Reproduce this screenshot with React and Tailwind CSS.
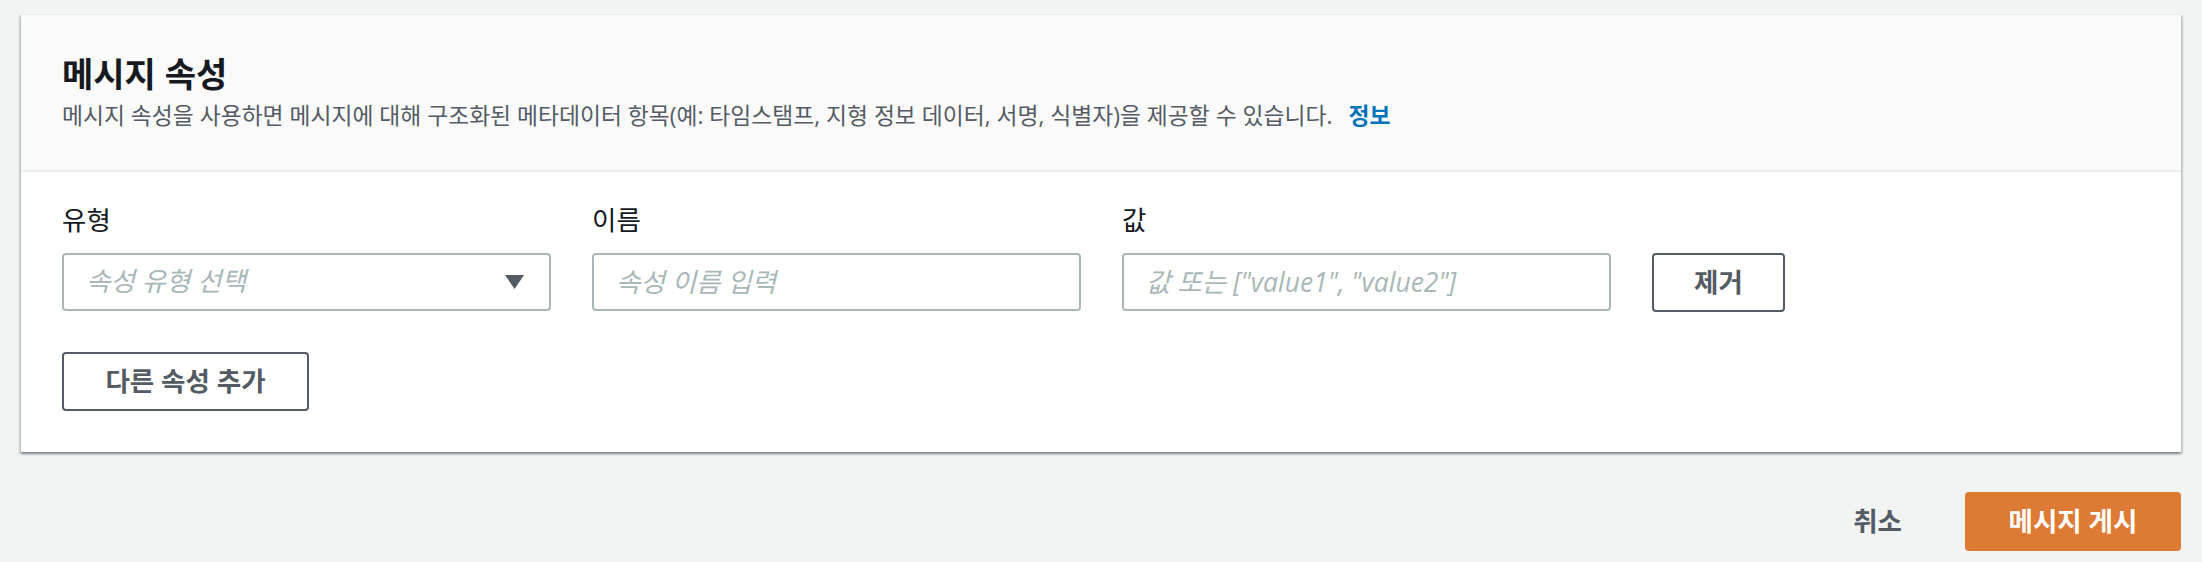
import { useState } from 'react'

// ─── Field label ──────────────────────────────────────────────────────────────
function Label({ children }) {
    return <div className="text-[26.5px] leading-[30px] text-[#16191f] mb-[18px]">{children}</div>
}

// ─── Text input ───────────────────────────────────────────────────────────────
function TextInput({ placeholder }) {
    return (
        <input
            placeholder={placeholder}
            className="w-[489px] h-[58px] border-2 border-[#aab7b8] rounded-[4px] bg-white pl-[22px] pr-4 text-[26.5px] text-[#16191f] outline-none placeholder:italic placeholder:text-[#aab7b8]"
        />
    )
}

// ─── Select (type) ────────────────────────────────────────────────────────────
function TypeSelect() {
    const [open, setOpen] = useState(false)
    return (
        <button
            onClick={() => setOpen(p => !p)}
            className="w-[489px] h-[58px] flex items-center justify-between border-2 border-[#aab7b8] rounded-[4px] bg-white pl-[22px] pr-[25px] text-left"
        >
            <span className="italic text-[26.5px] text-[#aab7b8]">속성 유형 선택</span>
            <svg width="19" height="14" viewBox="0 0 19 14" className="shrink-0">
                <polygon points="0,0 19,0 9.5,14" fill="#545b64" />
            </svg>
        </button>
    )
}

// ─── Secondary button ─────────────────────────────────────────────────────────
function OutlineBtn({ children, className = '' }) {
    return (
        <button className={`h-[59px] border-2 border-[#545b64] rounded-[4px] bg-white text-[26.5px] font-bold text-[#545b64] ${className}`}>
            {children}
        </button>
    )
}

export default function App() {
    return (
        <div className="min-h-[562px] bg-[#f2f3f3] px-[21px] pt-[14px] pb-[11px] font-['Open_Sans','Noto_Sans_CJK_KR',sans-serif]">

            {/* ── Card ─────────────────────────────────────────────────── */}
            <div className="bg-white shadow-[0_2px_2px_0_rgba(0,28,36,0.3),2px_2px_2px_0_rgba(0,28,36,0.15),-2px_2px_2px_0_rgba(0,28,36,0.15)] border-t border-[#eaeded]">

                {/* header */}
                <div className="bg-[#fafafa] border-b-2 border-[#eaeded] px-[41px] pt-[39px] pb-[39px]">
                    <h2 className="text-[34px] leading-[40px] font-bold text-[#16191f] mb-[7px]">메시지 속성</h2>
                    <p className="text-[22.8px] leading-[30px] text-[#545b64] whitespace-nowrap">
                        메시지 속성을 사용하면 메시지에 대해 구조화된 메타데이터 항목(예: 타임스탬프, 지형 정보 데이터, 서명, 식별자)을 제공할 수 있습니다.
                        <a className="ml-[16px] font-bold text-[#0073bb] cursor-pointer">정보</a>
                    </p>
                </div>

                {/* body */}
                <div className="px-[41px] pt-[33px] pb-[41px]">
                    <div className="flex items-end gap-[41px]">
                        <div>
                            <Label>유형</Label>
                            <TypeSelect />
                        </div>
                        <div>
                            <Label>이름</Label>
                            <TextInput placeholder="속성 이름 입력" />
                        </div>
                        <div>
                            <Label>값</Label>
                            <TextInput placeholder={'값 또는 ["value1", "value2"]'} />
                        </div>
                        <OutlineBtn className="w-[133px] mb-[-1px]">제거</OutlineBtn>
                    </div>

                    <OutlineBtn className="w-[247px] mt-[41px]">다른 속성 추가</OutlineBtn>
                </div>
            </div>

            {/* ── Footer actions ───────────────────────────────────────── */}
            <div className="flex items-center justify-end mt-[40px]">
                <button className="text-[26.5px] font-bold text-[#545b64] px-[20px] mr-[43px]">취소</button>
                <button className="w-[216px] h-[59px] rounded-[4px] bg-[#dd7a34] text-white text-[26.5px] font-bold">
                    메시지 게시
                </button>
            </div>
        </div>
    )
}
